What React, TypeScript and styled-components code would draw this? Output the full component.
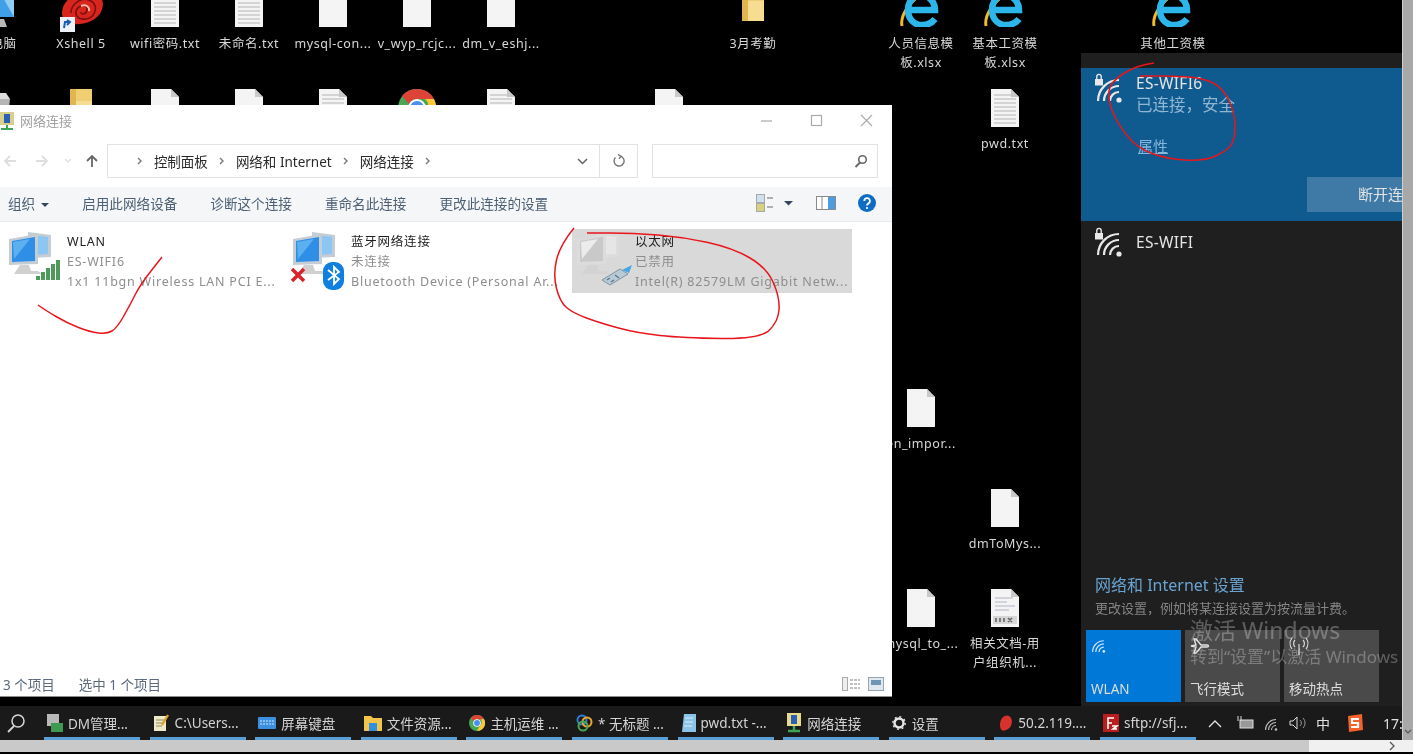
import React, { ReactNode } from 'react';
import styled, { createGlobalStyle } from 'styled-components';

const CJK = '"Noto Sans", "Noto Sans CJK SC", sans-serif';

const GlobalStyle = createGlobalStyle`
    html, body {
        margin: 0;
        padding: 0;
        background: #000;
        overflow: hidden;
    }
`;

const Screen = styled.div`
    position: relative;
    width: 1413px;
    height: 754px;
    overflow: hidden;
    background: #000;
    font-family: ${CJK};
    filter: blur(0.55px);
`;

/* desktop */

const Desktop = styled.div`
    position: absolute;
    top: -11px;
    left: -45px;
    display: grid;
    grid-template-columns: repeat(17, 84px);
    grid-auto-rows: 100px;
`;

const DesktopCell = styled.div<{ $col: number; $row: number }>`
    grid-column: ${(p) => p.$col};
    grid-row: ${(p) => p.$row};
    display: flex;
    flex-direction: column;
    align-items: center;
`;

const IconSlot = styled.div`
    height: 38px;
    display: flex;
    align-items: flex-end;
    justify-content: center;
`;

const DesktopLabel = styled.div`
    margin-top: 7px;
    width: 84px;
    color: #d8d8d8;
    font-size: 12.5px;
    line-height: 19px;
    letter-spacing: 0.55px;
    text-align: center;
    white-space: pre-line;
`;

const FileIcon = ({ kind = 'blank' }: { kind?: 'blank' | 'text' | 'docx' }) => (
    <svg width="30" height="38" viewBox="0 0 30 38">
        <path d="M1 0h20l8 8v30H1z" fill="#f4f4f4" />
        <path d="M21 0l8 8h-8z" fill="#c9c9c9" />
        {kind === 'text' &&
            [6, 10, 14, 18, 22, 26, 30, 34].map((y) => (
                <path key={y} d={`M4 ${y}h22`} stroke="#c6c6c6" strokeWidth="1.4" />
            ))}
        {kind === 'docx' && (
            <>
                <path d="M5 9h18M5 13h12M5 17h20M5 21h14" stroke="#aeb4c4" strokeWidth="1" />
                <rect x="3" y="27" width="24" height="8" fill="#d6d6d6" />
                <path d="M6 29v4M10 29v4M14 29v4M18 29l4 4M22 29l-4 4" stroke="#666" strokeWidth="1.6" />
            </>
        )}
    </svg>
);

const FolderIcon = () => (
    <svg width="34" height="38" viewBox="0 0 34 38">
        <path d="M6 0h22v32H6z" fill="#f0cf72" />
        <path d="M6 0h6v32H6z" fill="#e2b64e" />
        <path d="M12 12h16v20H12z" fill="#f7dd92" />
    </svg>
);

const EdgeIcon = () => (
    <svg width="42" height="38" viewBox="0 0 42 38">
        <path d="M2 37C0 27 9 12 24 4" fill="none" stroke="#eebb2c" strokeWidth="3" />
        <path
            d="M10 21h25C35 12 28 6 21 6S8 12 8 21s6 15 14 15c6 0 10-2 13-6"
            fill="none"
            stroke="#2cb6ea"
            strokeWidth="6.5"
        />
    </svg>
);

const XshellIcon = () => (
    <svg width="44" height="44" viewBox="0 0 44 44" style={{ marginBottom: -6 }}>
        <path d="M3 24C3 8 24 0 36 4s10 22-4 28-29 4-29-8z" fill="#d8261f" />
        <path d="M12 24c0-10 12-17 20-12s4 17-5 18-12-5-9-10 11-4 10 1-6 5-6 2" fill="none" stroke="#7d0f0c" strokeWidth="1.6" />
        <path d="M22 17c5-2 9 1 8 5" fill="none" stroke="#ffb7a6" strokeWidth="2" />
        <rect x="1" y="28" width="15" height="15" fill="#eef2f7" />
        <path d="M5 39l1-6 5 0M8 31l3 2-3 3" fill="none" stroke="#1a5fb4" strokeWidth="2" />
    </svg>
);

const ChromeIcon = ({ size = 38 }: { size?: number }) => (
    <svg width={size} height={size} viewBox="0 0 38 38">
        <circle cx="19" cy="19" r="19" fill="#4aa657" />
        <path d="M19 0a19 19 0 0 1 17 10H19a9 9 0 0 0-8 5L4 7a19 19 0 0 1 15-7z" fill="#db4437" />
        <path d="M36 10a19 19 0 0 1-17 28l8-14a9 9 0 0 0 0-14z" fill="#fcc934" />
        <circle cx="19" cy="19" r="9" fill="#fff" />
        <circle cx="19" cy="19" r="7" fill="#4a8ef0" />
    </svg>
);

const ComputerIcon = () => (
    <svg width="38" height="38" viewBox="0 0 38 38">
        <path d="M2 0h34v28H2z" fill="#3fa0e8" />
        <path d="M20 0h16v28z" fill="#8fcdf5" />
        <path d="M12 30h14l3 8H9z" fill="#b8b8b8" />
    </svg>
);

const RecycleIcon = () => (
    <svg width="38" height="38" viewBox="0 0 38 38">
        <path d="M6 10h26l-3 28H9z" fill="#b5b5b5" />
        <path d="M10 4h18l4 6H6z" fill="#dcdcdc" />
    </svg>
);

const desktopItems: { col: number; row: number; icon?: ReactNode; label?: string }[] = [
    { col: 1, row: 1, icon: <ComputerIcon />, label: '此电脑' },
    { col: 2, row: 1, icon: <XshellIcon />, label: 'Xshell 5' },
    { col: 3, row: 1, icon: <FileIcon kind="text" />, label: 'wifi密码.txt' },
    { col: 4, row: 1, icon: <FileIcon kind="text" />, label: '未命名.txt' },
    { col: 5, row: 1, icon: <FileIcon />, label: 'mysql-con...' },
    { col: 6, row: 1, icon: <FileIcon />, label: 'v_wyp_rcjc...' },
    { col: 7, row: 1, icon: <FileIcon />, label: 'dm_v_eshj...' },
    { col: 10, row: 1, icon: <FolderIcon />, label: '3月考勤' },
    { col: 12, row: 1, icon: <EdgeIcon />, label: '人员信息模\n板.xlsx' },
    { col: 13, row: 1, icon: <EdgeIcon />, label: '基本工资模\n板.xlsx' },
    { col: 15, row: 1, icon: <EdgeIcon />, label: '其他工资模' },
    { col: 1, row: 2, icon: <RecycleIcon /> },
    { col: 2, row: 2, icon: <FolderIcon /> },
    { col: 3, row: 2, icon: <FileIcon /> },
    { col: 4, row: 2, icon: <FileIcon /> },
    { col: 5, row: 2, icon: <FileIcon kind="text" /> },
    { col: 6, row: 2, icon: <ChromeIcon /> },
    { col: 7, row: 2, icon: <FileIcon kind="text" /> },
    { col: 9, row: 2, icon: <FileIcon /> },
    { col: 13, row: 2, icon: <FileIcon kind="text" />, label: 'pwd.txt' },
    { col: 12, row: 5, icon: <FileIcon />, label: 'en_impor...' },
    { col: 13, row: 6, icon: <FileIcon />, label: 'dmToMys...' },
    { col: 12, row: 7, icon: <FileIcon />, label: 'mysql_to_...' },
    { col: 13, row: 7, icon: <FileIcon kind="docx" />, label: '相关文档-用\n户组织机...' },
];

/* explorer window */

const ExplorerWindow = styled.section`
    position: absolute;
    top: 105px;
    left: 0;
    width: 892px;
    height: 592px;
    display: flex;
    flex-direction: column;
    background: #fff;
    border-bottom: 1px solid #8c8c8c;
    box-sizing: border-box;
`;

const TitleBar = styled.header`
    height: 39px;
    display: flex;
    align-items: center;
    gap: 6px;
    padding: 0 19px 8px 0;
    box-sizing: border-box;
`;

const TitleText = styled.span`
    color: #a2a2a2;
    font-size: 13px;
    flex: 1;
`;

const WindowControls = styled.div`
    display: flex;
    align-items: center;
    gap: 37px;
`;

const AddressRow = styled.div`
    height: 34px;
    display: flex;
    align-items: center;
    padding-right: 14px;
`;

const NavButtons = styled.div`
    width: 107px;
    padding-left: 2px;
    display: flex;
    align-items: center;
    gap: 16px;
    box-sizing: border-box;
`;

const NavDrop = styled.svg`
    margin: 0 -4px 0 -2px;
`;

const AddressBox = styled.div`
    width: 494px;
    height: 34px;
    display: flex;
    align-items: center;
    gap: 11px;
    padding: 0 11px 0 29px;
    border: 1px solid #e2e2e2;
    box-sizing: border-box;
    font-size: 13.5px;
    color: #2a2a2a;
`;

const RefreshCell = styled.div`
    width: 38px;
    height: 34px;
    display: flex;
    align-items: center;
    justify-content: center;
    border: 1px solid #e2e2e2;
    border-left: none;
    box-sizing: border-box;
`;

const SearchBox = styled.div`
    width: 226px;
    height: 34px;
    margin-left: 14px;
    display: flex;
    align-items: center;
    justify-content: flex-end;
    padding-right: 9px;
    border: 1px solid #e2e2e2;
    box-sizing: border-box;
`;

const Crumb = styled.span`
    white-space: nowrap;
`;

const CrumbPad = styled.span`
    flex: 1;
`;

const Toolbar = styled.div`
    height: 35px;
    margin-top: 9px;
    display: flex;
    align-items: center;
    gap: 33px;
    padding: 0 16px 3px 8px;
    background: #f5f6f7;
    border-bottom: 1px solid #eaeaea;
    box-sizing: border-box;
    font-size: 13.6px;
    color: #4c6075;
`;

const ToolbarIcons = styled.div`
    margin-left: auto;
    display: flex;
    align-items: center;
    gap: 22px;
`;

const DropCaret = styled.span`
    display: inline-block;
    margin-left: 6px;
    vertical-align: middle;
    border-left: 4px solid transparent;
    border-right: 4px solid transparent;
    border-top: 4px solid #33475c;
`;

const ConnectionList = styled.div`
    flex: 1;
    display: grid;
    grid-template-columns: repeat(3, 280px);
    column-gap: 4px;
    align-content: start;
    padding: 7px 0 0 4px;
`;

const Connection = styled.div<{ $selected?: boolean }>`
    height: 64px;
    display: flex;
    gap: 7px;
    padding-left: 4px;
    background: ${(p) => (p.$selected ? '#d9d9d9' : 'transparent')};
`;

const ConnectionIcon = styled.div`
    width: 52px;
    height: 60px;
    flex: none;
    margin-top: 2px;
`;

const ConnectionText = styled.div`
    min-width: 0;
    flex: 1;
    padding-right: 4px;
    font-size: 12.5px;
    line-height: 20px;
    letter-spacing: 0.78px;
    color: #8e8e8e;
    margin-top: 3px;
`;

const ConnectionLine = styled.div<{ $title?: boolean }>`
    color: ${(p) => (p.$title ? '#222' : '#8e8e8e')};
    white-space: nowrap;
`;

const StatusBar = styled.footer`
    height: 25px;
    display: flex;
    align-items: center;
    gap: 24px;
    padding: 0 8px 0 3px;
    font-size: 13.5px;
    color: #5a6a7c;
`;

const StatusViews = styled.div`
    margin-left: auto;
    display: flex;
    gap: 8px;
`;

const NetworkIcon = ({ disabled, badge }: { disabled?: boolean; badge: 'signal' | 'bluetooth' | 'plug' }) => {
    const glass = disabled ? '#c9c9c9' : '#2f8fe6';
    const glass2 = disabled ? '#e6e6e6' : '#8cc6f2';
    const frame = disabled ? '#dcdcdc' : '#c4ccd4';
    return (
        <svg width="62" height="60" viewBox="0 0 62 60" style={{ overflow: 'visible' }}>
            <path d="M20 1l23 3v22l-23 1z" fill={frame} />
            <path d="M23 4l17 2v17l-17 1z" fill={glass2} />
            <path d="M1 8l29-5v30L1 34z" fill={frame} />
            <path d="M4 10l23-4v24L4 31z" fill={glass} />
            <path d="M5 11l17-3-16 20z" fill={disabled ? '#ececec' : '#5db0f0'} />
            <path d="M12 34h9l2 6H8zM8 40h22l4 3H6z" fill={disabled ? '#d3d3d3' : '#d0d0d0'} />
            {badge === 'signal' && (
                <g fill="#4d9a5b">
                    <rect x="28" y="45" width="4" height="4" />
                    <rect x="33" y="41" width="4" height="8" />
                    <rect x="38" y="37" width="4" height="12" />
                    <rect x="43" y="33" width="4" height="16" />
                    <rect x="48" y="29" width="4" height="20" />
                </g>
            )}
            {badge === 'bluetooth' && (
                <>
                    <path d="M0 38l12 12M12 38L0 50" stroke="#d8232a" strokeWidth="3.5" />
                    <rect x="31" y="31" width="21" height="28" rx="9" fill="#1080e0" />
                    <path d="M36 39l11 9-5 5V36l5 5-11 8" fill="none" stroke="#fff" strokeWidth="1.8" />
                </>
            )}
            {badge === 'plug' && (
                <g>
                    <path d="M26 49l18-11 8 5-18 11z" fill="#b9cad6" stroke="#7f94a3" strokeWidth="1" />
                    <path d="M31 49l3-2M35 51l3-2M39 44l4 3" stroke="#5c7586" strokeWidth="1.4" />
                    <path d="M46 39l10-5-3 8z" fill="#48a6e0" />
                </g>
            )}
        </svg>
    );
};

const connections = [
    {
        title: 'WLAN',
        state: 'ES-WIFI6',
        device: '1x1 11bgn Wireless LAN PCI E...',
        badge: 'signal' as const,
    },
    {
        title: '蓝牙网络连接',
        state: '未连接',
        device: 'Bluetooth Device (Personal Ar...',
        badge: 'bluetooth' as const,
    },
    {
        title: '以太网',
        state: '已禁用',
        device: 'Intel(R) 82579LM Gigabit Netw...',
        badge: 'plug' as const,
        selected: true,
    },
];

const Chevron = () => (
    <svg width="6" height="8" viewBox="0 0 6 8">
        <path d="M1 1l3 3-3 3" fill="none" stroke="#777" strokeWidth="1.4" />
    </svg>
);

const NavArrow = ({ dir, color }: { dir: 'left' | 'right' | 'up'; color: string }) => {
    const rotate = dir === 'left' ? 180 : dir === 'up' ? -90 : 0;
    return (
        <svg width="16" height="16" viewBox="0 0 16 16" style={{ transform: `rotate(${rotate}deg)` }}>
            <path d="M2 8h11M8 3l5 5-5 5" fill="none" stroke={color} strokeWidth="1.8" />
        </svg>
    );
};

/* wifi flyout */

const Flyout = styled.aside`
    position: absolute;
    top: 53px;
    left: 1081px;
    width: 322px;
    height: 653px;
    display: flex;
    flex-direction: column;
    background: #1f1f1f;
    overflow: hidden;
    color: #e4e4e4;
`;

const ActiveNetwork = styled.div`
    margin-top: 15px;
    height: 153px;
    padding: 5px 0 0 14px;
    box-sizing: border-box;
    position: relative;
    display: flex;
    gap: 11px;
    background: #0f5a8f;
`;

const NetworkRow = styled.div`
    height: 42px;
    padding-left: 14px;
    display: flex;
    align-items: center;
    gap: 11px;
    box-sizing: border-box;
`;

const NetworkInfo = styled.div`
    display: flex;
    flex-direction: column;
    align-items: flex-start;
`;

const NetworkName = styled.div`
    font-size: 15.5px;
    line-height: 20px;
    letter-spacing: 0.3px;
`;

const NetworkState = styled.div`
    font-size: 16.5px;
    line-height: 24px;
    color: #8fb6d2;
`;

const NetworkLink = styled.div`
    margin: 19px 0 0 2px;
    font-size: 15px;
    line-height: 20px;
    color: #86b6dc;
    text-decoration: underline;
`;

const DisconnectButton = styled.div`
    position: absolute;
    right: 0;
    bottom: 9px;
    width: 96px;
    height: 35px;
    padding-left: 51px;
    box-sizing: border-box;
    background: #3f7aa6;
    font-size: 15px;
    line-height: 35px;
    white-space: nowrap;
    overflow: hidden;
`;

const FlyoutSpacer = styled.div`
    flex: 1;
`;

const SettingsLink = styled.div`
    padding-left: 14px;
    font-size: 16px;
    line-height: 22px;
    color: #69a3d1;
`;

const SettingsHint = styled.div`
    padding-left: 14px;
    margin-top: 3px;
    font-size: 13px;
    line-height: 18px;
    color: #858585;
    white-space: nowrap;
`;

const QuickTiles = styled.div`
    margin: 13px 0 4px 5px;
    display: flex;
    gap: 4px;
`;

const QuickTile = styled.div<{ $active?: boolean }>`
    width: 95px;
    height: 72px;
    padding: 7px 5px 4px;
    box-sizing: border-box;
    display: flex;
    flex-direction: column;
    justify-content: space-between;
    background: ${(p) => (p.$active ? '#0078d7' : '#4a4a4a')};
    font-size: 13.5px;
    line-height: 18px;
    color: #dedede;
`;

const Watermark = styled.div`
    position: absolute;
    left: 1190px;
    top: 615px;
    width: 213px;
    overflow: hidden;
    color: rgba(255, 255, 255, 0.28);
    white-space: nowrap;
    pointer-events: none;
`;

const WatermarkTitle = styled.div`
    font-size: 23px;
    line-height: 30px;
`;

const WatermarkSub = styled.div`
    font-size: 17px;
    line-height: 24px;
`;

const WifiIcon = ({ lock, size = 30, color = '#e8e8e8' }: { lock?: boolean; size?: number; color?: string }) => (
    <svg width={size} height={size} viewBox="0 0 30 30" style={{ flex: 'none' }}>
        <circle cx="24" cy="27" r="2.6" fill={color} />
        <path
            d="M15 28a9 9 0 0 1 9-9M9 28a15 15 0 0 1 15-15M3 28a21 21 0 0 1 21-21"
            fill="none"
            stroke={color}
            strokeWidth="2.2"
        />
        {lock && (
            <>
                <rect x="0" y="6" width="8" height="6.5" fill={color} />
                <path d="M1.8 6V3.6a2.2 2.2 0 0 1 4.4 0V6" fill="none" stroke={color} strokeWidth="1.4" />
            </>
        )}
    </svg>
);

/* taskbar */

const Taskbar = styled.nav`
    position: absolute;
    top: 706px;
    left: 0;
    width: 1403px;
    height: 34px;
    display: flex;
    align-items: stretch;
    background: #1a1a1a;
    overflow: hidden;
`;

const SearchButton = styled.div`
    width: 44px;
    flex: none;
    display: flex;
    align-items: center;
    padding: 0 0 0 6px;
    box-sizing: border-box;
`;

const TaskList = styled.div`
    display: flex;
    gap: 9.6px;
`;

const TaskItem = styled.div`
    width: 96px;
    display: flex;
    align-items: center;
    gap: 5px;
    padding: 3px 0 0 3px;
    border-bottom: 3px solid #5a9fd6;
    box-sizing: border-box;
    color: #d4d4d4;
    font-size: 13.5px;
    white-space: nowrap;
    overflow: hidden;
`;

const Tray = styled.div`
    margin-left: 12px;
    display: flex;
    align-items: center;
    gap: 10px;
    color: #e0e0e0;
    font-size: 14px;
    white-space: nowrap;
`;

const TrayItem = styled.div<{ $extra?: number }>`
    display: flex;
    align-items: center;
    margin-left: ${(p) => p.$extra ?? 0}px;
`;

const VerticalScroll = styled.div`
    position: absolute;
    top: 0;
    right: 0;
    width: 11px;
    height: 740px;
    display: flex;
    align-items: flex-end;
    justify-content: center;
    background: #a8a8a8;
    border-left: 1px solid #cfcfcf;
    box-sizing: border-box;
`;

const HorizontalScroll = styled.div`
    position: absolute;
    top: 740px;
    left: 0;
    width: 1413px;
    height: 12px;
    display: flex;
    background: #f0f0f0;
`;

const ScrollThumb = styled.div`
    width: 1309px;
    background: #c9c9c9;
`;

const ScrollArrow = styled.div`
    margin-left: 80px;
    display: flex;
    align-items: center;
`;

const Ink = styled.svg`
    position: absolute;
    inset: 0;
    pointer-events: none;
`;

const smooth = (pts: number[][]) => {
    let d = `M${pts[0][0]} ${pts[0][1]}`;
    for (let i = 1; i < pts.length - 1; i += 1) {
        const mx = (pts[i][0] + pts[i + 1][0]) / 2;
        const my = (pts[i][1] + pts[i + 1][1]) / 2;
        d += ` Q${pts[i][0]} ${pts[i][1]} ${mx} ${my}`;
    }
    const last = pts[pts.length - 1];
    return `${d} L${last[0]} ${last[1]}`;
};

const strokes = [
    [[38, 305], [45, 310], [67, 323], [90, 332], [107, 334], [117, 328], [130, 305], [140, 285], [162, 257]],
    [[574, 228], [560, 245], [553, 275], [560, 302], [573, 313], [600, 323], [637, 333], [683, 338], [760, 339], [778, 322], [780, 298], [767, 268], [733, 248], [683, 237], [633, 233], [587, 233]],
    [[1154, 63], [1137, 65], [1110, 82], [1108, 100], [1117, 123], [1137, 148], [1167, 159], [1203, 161], [1223, 153], [1235, 142], [1235, 113], [1223, 88], [1203, 78], [1173, 76], [1140, 76]],
];

const tasks: { label: string; icon: ReactNode }[] = [
    {
        label: 'DM管理...',
        icon: (
            <svg width="16" height="18" viewBox="0 0 16 18">
                <rect x="0" y="0" width="12" height="12" fill="#b8b8b8" />
                <rect x="4" y="9" width="12" height="9" fill="#3e9a52" />
            </svg>
        ),
    },
    {
        label: 'C:\\Users...',
        icon: (
            <svg width="17" height="18" viewBox="0 0 17 18">
                <rect x="1" y="2" width="12" height="15" fill="#efe9c8" />
                <path d="M3 6h8M3 9h8M3 12h6" stroke="#8a8a60" />
                <path d="M9 11L15 1" stroke="#d8a32a" strokeWidth="2.4" />
            </svg>
        ),
    },
    {
        label: '屏幕键盘',
        icon: (
            <svg width="18" height="12" viewBox="0 0 18 12">
                <rect width="18" height="12" rx="1" fill="#3d8fe0" />
                <path d="M2 4h14M2 7h14" stroke="#cfe6fb" strokeDasharray="2 1" />
            </svg>
        ),
    },
    {
        label: '文件资源...',
        icon: (
            <svg width="18" height="16" viewBox="0 0 18 16">
                <path d="M0 1h7l2 2h9v13H0z" fill="#f2c54a" />
                <rect x="5" y="8" width="8" height="8" fill="#2f8fe0" />
            </svg>
        ),
    },
    { label: '主机运维 ...', icon: <ChromeIcon size={16} /> },
    {
        label: '* 无标题 ...',
        icon: (
            <svg width="18" height="18" viewBox="0 0 18 18">
                <circle cx="7" cy="6" r="4.5" fill="none" stroke="#2e7ddb" strokeWidth="2" />
                <circle cx="12" cy="8" r="4.5" fill="none" stroke="#f0a22e" strokeWidth="2" />
                <circle cx="8" cy="12" r="4.5" fill="none" stroke="#48a84f" strokeWidth="2" />
            </svg>
        ),
    },
    {
        label: 'pwd.txt -...',
        icon: (
            <svg width="15" height="18" viewBox="0 0 15 18">
                <path d="M3 0h12v18H1z" fill="#8cc4e8" />
                <path d="M4 4h8M4 8h8M3 12h8" stroke="#d8eefa" />
            </svg>
        ),
    },
    {
        label: '网络连接',
        icon: (
            <svg width="16" height="20" viewBox="0 0 16 20">
                <rect x="1" y="0" width="14" height="13" fill="#e9d98a" />
                <rect x="5" y="2" width="6" height="9" fill="#2a5fb8" />
                <path d="M8 13v4M2 18h12" stroke="#3aa655" strokeWidth="2.5" />
            </svg>
        ),
    },
    {
        label: '设置',
        icon: (
            <svg width="15" height="14" viewBox="0 0 15 14">
                <circle cx="7" cy="7" r="4.5" fill="none" stroke="#e8e8e8" strokeWidth="2.4" />
                <circle cx="7" cy="7" r="6.2" fill="none" stroke="#e8e8e8" strokeWidth="1.4" strokeDasharray="2 2.8" />
            </svg>
        ),
    },
    {
        label: '50.2.119....',
        icon: (
            <svg width="16" height="18" viewBox="0 0 16 18">
                <path d="M3 11C3 4 8 0 12 2s4 10-1 13-8 2-8-4z" fill="#d8322c" />
            </svg>
        ),
    },
    {
        label: 'sftp://sfj...',
        icon: (
            <svg width="16" height="18" viewBox="0 0 16 18">
                <rect width="16" height="18" fill="#b81e1e" />
                <path d="M5 15V4h6M5 9h4M9 12h5l-4 3h4" fill="none" stroke="#fff" strokeWidth="1.6" />
            </svg>
        ),
    },
];

export default function App() {
    return (
        <Screen>
            <GlobalStyle />
            <Desktop>
                {desktopItems.map((item, i) => (
                    <DesktopCell key={i} $col={item.col} $row={item.row}>
                        <IconSlot>{item.icon}</IconSlot>
                        {item.label && <DesktopLabel>{item.label}</DesktopLabel>}
                    </DesktopCell>
                ))}
            </Desktop>

            <ExplorerWindow>
                <TitleBar>
                    <svg width="14" height="18" viewBox="0 0 14 18" style={{ flex: 'none' }}>
                        <rect x="0" y="0" width="14" height="13" fill="#d9cf8c" />
                        <rect x="4" y="2" width="6" height="9" fill="#2a5fb8" />
                        <path d="M7 13v3M1 17h12" stroke="#3aa655" strokeWidth="2" />
                    </svg>
                    <TitleText>网络连接</TitleText>
                    <WindowControls>
                        <svg width="13" height="13" viewBox="0 0 13 13">
                            <path d="M1 7h11" stroke="#aaa" strokeWidth="1.2" />
                        </svg>
                        <svg width="13" height="13" viewBox="0 0 13 13">
                            <rect x="1.5" y="1.5" width="10" height="10" fill="none" stroke="#aaa" strokeWidth="1.2" />
                        </svg>
                        <svg width="13" height="13" viewBox="0 0 13 13">
                            <path d="M1 1l11 11M12 1L1 12" stroke="#aaa" strokeWidth="1.1" />
                        </svg>
                    </WindowControls>
                </TitleBar>

                <AddressRow>
                    <NavButtons>
                        <NavArrow dir="left" color="#dedede" />
                        <NavArrow dir="right" color="#dedede" />
                        <NavDrop width="8" height="6" viewBox="0 0 8 6">
                            <path d="M1 1l3 3 3-3" fill="none" stroke="#dedede" strokeWidth="1.2" />
                        </NavDrop>
                        <NavArrow dir="up" color="#666" />
                    </NavButtons>
                    <AddressBox>
                        <Chevron />
                        <Crumb>控制面板</Crumb>
                        <Chevron />
                        <Crumb>网络和 Internet</Crumb>
                        <Chevron />
                        <Crumb>网络连接</Crumb>
                        <Chevron />
                        <CrumbPad />
                        <svg width="11" height="7" viewBox="0 0 11 7">
                            <path d="M1 1l4.5 4.5L10 1" fill="none" stroke="#666" strokeWidth="1.5" />
                        </svg>
                    </AddressBox>
                    <RefreshCell>
                        <svg width="14" height="14" viewBox="0 0 14 14">
                            <path d="M3.5 3.5a5 5 0 1 0 5-1.3M6 0.5l3 1.8L7 4.8" fill="none" stroke="#777" strokeWidth="1.4" />
                        </svg>
                    </RefreshCell>
                    <SearchBox>
                        <svg width="14" height="14" viewBox="0 0 14 14">
                            <circle cx="8.5" cy="5.5" r="3.8" fill="none" stroke="#666" strokeWidth="1.6" />
                            <path d="M6 8.5L1.5 13" stroke="#666" strokeWidth="2" />
                        </svg>
                    </SearchBox>
                </AddressRow>

                <Toolbar>
                    <span>
                        组织
                        <DropCaret />
                    </span>
                    <span>启用此网络设备</span>
                    <span>诊断这个连接</span>
                    <span>重命名此连接</span>
                    <span>更改此连接的设置</span>
                    <ToolbarIcons>
                        <svg width="38" height="18" viewBox="0 0 38 18">
                            <rect x="0.5" y="0.5" width="8" height="8" fill="#cfe0ee" stroke="#a8a8a8" />
                            <rect x="0.5" y="9.5" width="8" height="8" fill="#d8d27c" stroke="#a8a8a8" />
                            <path d="M11 4h6M11 13h6" stroke="#999" strokeWidth="1.4" />
                            <path d="M28 7h9l-4.500 4.500z" fill="#33475c" />
                        </svg>
                        <svg width="20" height="14" viewBox="0 0 20 14">
                            <rect x="0.5" y="0.5" width="19" height="13" fill="#fff" stroke="#8a8a8a" />
                            <rect x="12" y="1" width="7" height="12" fill="#4e9ce0" />
                            <path d="M6 1v12" stroke="#8a8a8a" />
                        </svg>
                        <svg width="18" height="18" viewBox="0 0 18 18">
                            <circle cx="9" cy="9" r="9" fill="#0f6cc4" />
                            <path d="M6.3 7a2.8 2.8 0 1 1 4.2 2.4C9.4 10 9 10.6 9 11.6" fill="none" stroke="#fff" strokeWidth="1.8" />
                            <circle cx="9" cy="14" r="1.1" fill="#fff" />
                        </svg>
                    </ToolbarIcons>
                </Toolbar>

                <ConnectionList>
                    {connections.map((c) => (
                        <Connection key={c.title} $selected={c.selected}>
                            <ConnectionIcon>
                                <NetworkIcon disabled={c.selected} badge={c.badge} />
                            </ConnectionIcon>
                            <ConnectionText>
                                <ConnectionLine $title>{c.title}</ConnectionLine>
                                <ConnectionLine>{c.state}</ConnectionLine>
                                <ConnectionLine>{c.device}</ConnectionLine>
                            </ConnectionText>
                        </Connection>
                    ))}
                </ConnectionList>

                <StatusBar>
                    <span>3 个项目</span>
                    <span>选中 1 个项目</span>
                    <StatusViews>
                        <svg width="18" height="14" viewBox="0 0 18 14">
                            <rect x="0.5" y="0.5" width="5" height="13" fill="#eee" stroke="#aaa" />
                            <path d="M8 3h10M8 7h10M8 11h10" stroke="#aaa" strokeWidth="1.4" strokeDasharray="3 1" />
                        </svg>
                        <svg width="16" height="14" viewBox="0 0 16 14">
                            <rect x="0.5" y="0.5" width="15" height="13" fill="#dfe8ef" stroke="#98a6b2" />
                            <rect x="3" y="3" width="10" height="5" fill="#6f95b5" />
                        </svg>
                    </StatusViews>
                </StatusBar>
            </ExplorerWindow>

            <Flyout>
                <ActiveNetwork>
                    <WifiIcon lock />
                    <NetworkInfo>
                        <NetworkName>ES-WIFI6</NetworkName>
                        <NetworkState>已连接，安全</NetworkState>
                        <NetworkLink>属性</NetworkLink>
                    </NetworkInfo>
                    <DisconnectButton>断开连接</DisconnectButton>
                </ActiveNetwork>
                <NetworkRow>
                    <WifiIcon lock />
                    <NetworkName>ES-WIFI</NetworkName>
                </NetworkRow>
                <FlyoutSpacer />
                <SettingsLink>网络和 Internet 设置</SettingsLink>
                <SettingsHint>更改设置，例如将某连接设置为按流量计费。</SettingsHint>
                <QuickTiles>
                    <QuickTile $active>
                        <WifiIcon size={16} color="#cfe6fa" />
                        <span>WLAN</span>
                    </QuickTile>
                    <QuickTile>
                        <svg width="20" height="18" viewBox="0 0 20 16">
                            <path d="M1 8l5-1-2-6h2l5 6h6c2 0 2 2 0 2h-6l-5 6H4l2-6z" fill="none" stroke="#e4e4e4" strokeWidth="1.4" />
                        </svg>
                        <span>飞行模式</span>
                    </QuickTile>
                    <QuickTile>
                        <svg width="20" height="18" viewBox="0 0 20 18">
                            <path d="M10 7v11M6 10a5 5 0 0 1 0-7M14 3a5 5 0 0 1 0 7M3 12a9 9 0 0 1 0-11M17 1a9 9 0 0 1 0 11" fill="none" stroke="#d8d8d8" strokeWidth="1.2" />
                        </svg>
                        <span>移动热点</span>
                    </QuickTile>
                </QuickTiles>
            </Flyout>

            <Watermark>
                <WatermarkTitle>激活 Windows</WatermarkTitle>
                <WatermarkSub>转到“设置”以激活 Windows</WatermarkSub>
            </Watermark>

            <Taskbar>
                <SearchButton>
                    <svg width="20" height="20" viewBox="0 0 20 20">
                        <circle cx="12" cy="8" r="6" fill="none" stroke="#d8d8d8" strokeWidth="1.5" />
                        <path d="M8 13l-6 6" stroke="#d8d8d8" strokeWidth="1.8" />
                    </svg>
                </SearchButton>
                <TaskList>
                    {tasks.map((t) => (
                        <TaskItem key={t.label}>
                            {t.icon}
                            <span>{t.label}</span>
                        </TaskItem>
                    ))}
                </TaskList>
                <Tray>
                    <TrayItem>
                        <svg width="14" height="9" viewBox="0 0 14 9">
                            <path d="M1 8l6-6 6 6" fill="none" stroke="#e0e0e0" strokeWidth="1.4" />
                        </svg>
                    </TrayItem>
                    <TrayItem $extra={4}>
                        <svg width="18" height="14" viewBox="0 0 18 14">
                            <rect x="4" y="4" width="13" height="8" fill="#999" stroke="#ddd" />
                            <path d="M2 0v5M5 0v5" stroke="#ddd" />
                        </svg>
                    </TrayItem>
                    <TrayItem>
                        <WifiIcon size={15} color="#bdbdbd" />
                    </TrayItem>
                    <TrayItem>
                        <svg width="17" height="14" viewBox="0 0 17 14">
                            <path d="M1 5h3l4-4v12L4 9H1z" fill="none" stroke="#ddd" />
                            <path d="M11 4a4 4 0 0 1 0 6M14 2a7 7 0 0 1 0 10" fill="none" stroke="#999" />
                        </svg>
                    </TrayItem>
                    <TrayItem>中</TrayItem>
                    <TrayItem $extra={6}>
                        <svg width="18" height="20" viewBox="0 0 18 20">
                            <path d="M2 3l14-2 1 16-14 2z" fill="#f2622a" />
                            <path d="M13 6H6v4h6v4H5" fill="none" stroke="#fff" strokeWidth="2.2" />
                        </svg>
                    </TrayItem>
                    <TrayItem $extra={9}>17:</TrayItem>
                </Tray>
            </Taskbar>

            <VerticalScroll>
                <svg width="8" height="6" viewBox="0 0 8 6" style={{ marginBottom: 5 }}>
                    <path d="M1 1l3 3 3-3" fill="none" stroke="#555" strokeWidth="1.2" />
                </svg>
            </VerticalScroll>
            <HorizontalScroll>
                <ScrollThumb />
                <ScrollArrow>
                    <svg width="7" height="10" viewBox="0 0 7 10">
                        <path d="M1 1l4 4-4 4" fill="none" stroke="#555" strokeWidth="1.3" />
                    </svg>
                </ScrollArrow>
            </HorizontalScroll>

            <Ink width="1413" height="754" viewBox="0 0 1413 754">
                {strokes.map((pts, i) => (
                    <path key={i} d={smooth(pts)} fill="none" stroke="#e8161c" strokeWidth="1.5" />
                ))}
            </Ink>
        </Screen>
    );
}
